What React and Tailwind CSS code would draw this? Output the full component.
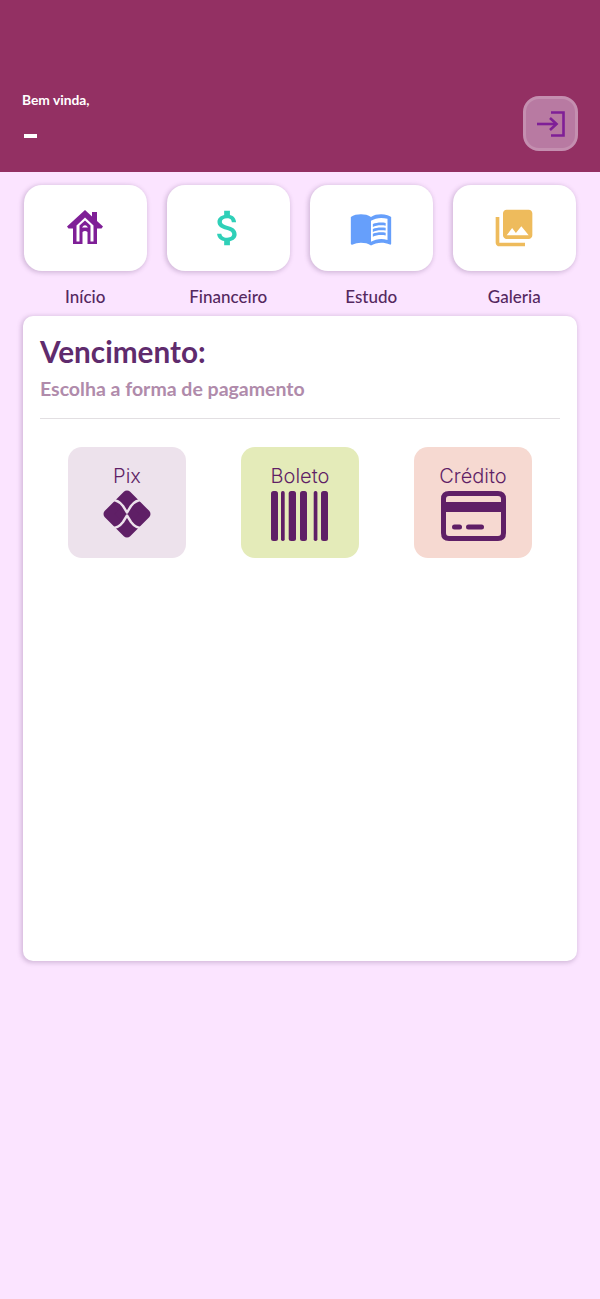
import { MdAttachMoney, MdMenuBook, MdPhotoLibrary } from "react-icons/md";

const HomeIcon = () => (
  <svg className="-mt-[2px]" width="36" height="34" viewBox="0 0 36 34">
    <path fill="#7f1f97" d="M18 0 L25 6.500 V2 H30 V11 L36 16.500 L34.500 18.500 H30 V34 H6 V18.500 H1.500 L0 16.500 Z" />
    <path fill="#ffffff" d="M18 7.500 L26.500 15.500 V31.500 H9.500 V15.500 Z" />
    <path fill="#7f1f97" d="M18 10.500 L23.500 15.500 V34 H12.500 V15.500 Z" />
    <path fill="#ffffff" d="M15.500 34 V22 Q18 20 20.500 22 V34 Z" />
    <path fill="#ffffff" d="M15 17.500 Q18 13 21 17.500 Z" />
  </svg>
);

const LoginIcon = () => (
  <svg width="30" height="26" viewBox="0 0 30 26" fill="none" stroke="#7f1f97" strokeWidth="2.600">
    <path d="M15 1.500 H27.500 V24.500 H15" />
    <path d="M1 13 H20" />
    <path d="M14 7 L20.500 13 L14 19" />
  </svg>
);

const PixIcon = () => (
  <svg className="-mt-[1px]" width="48" height="48" viewBox="0 0 48 48">
    <path
      d="M24 5 L43 24 L24 43 L5 24 Z"
      fill="#5f1f66"
      stroke="#5f1f66"
      strokeWidth="9"
      strokeLinejoin="round"
    />
    <path
      d="M9 10 C14 10 17 12 20 16 L24 22.500 L28 16 C31 12 34 10 39 10"
      fill="none"
      stroke="#ede2ec"
      strokeWidth="2.400"
      strokeLinejoin="round"
    />
    <path
      d="M9 38 C14 38 17 36 20 32 L24 25.500 L28 32 C31 36 34 38 39 38"
      fill="none"
      stroke="#ede2ec"
      strokeWidth="2.400"
      strokeLinejoin="round"
    />
  </svg>
);

const BarcodeIcon = () => (
  <svg width="58" height="50" viewBox="0 0 58 50" fill="#5f1f66">
    <rect x="0" y="0" width="7" height="50" rx="2.500" />
    <rect x="10" y="0" width="3.700" height="50" rx="1.700" />
    <rect x="17.700" y="0" width="7.300" height="50" rx="2.500" />
    <rect x="29" y="0" width="7" height="50" rx="2.500" />
    <rect x="42.700" y="0" width="3.700" height="50" rx="1.700" />
    <rect x="50" y="0" width="7" height="50" rx="2.500" />
  </svg>
);

const CardIcon = () => (
  <svg width="65" height="50" viewBox="0 0 65 50" fill="#5f1f66">
    <path
      fillRule="evenodd"
      d="M8 0 H57 Q65 0 65 8 V42 Q65 50 57 50 H8 Q0 50 0 42 V8 Q0 0 8 0 Z M8 5 Q5 5 5 8 V11 H60 V8 Q60 5 57 5 Z M5 21 V42 Q5 45 8 45 H57 Q60 45 60 42 V21 Z"
    />
    <rect x="11" y="33.500" width="10" height="5" rx="2.500" />
    <rect x="25" y="33.500" width="18" height="5" rx="2.500" />
  </svg>
);

const menu = [
  { label: "Início", icon: <HomeIcon /> },
  { label: "Financeiro", icon: <MdAttachMoney size={46} color="#2fd0b8" /> },
  { label: "Estudo", icon: <MdMenuBook size={44} color="#669ffb" /> },
  { label: "Galeria", icon: <MdPhotoLibrary size={44} color="#eebb5c" /> },
];

const payments = [
  { label: "Pix", bg: "bg-[#ede2ec]", icon: <PixIcon /> },
  { label: "Boleto", bg: "bg-[#e4ebb9]", icon: <BarcodeIcon /> },
  { label: "Crédito", bg: "bg-[#f6d9d1]", icon: <CardIcon /> },
];

const App = () => {
  return (
    <div className="min-h-[1299px] bg-[#fbe4ff] font-['Lato',sans-serif]">
      {/* HEADER */}
      <header className="flex h-[172px] items-end justify-between bg-[#933063] px-[22px] pb-[21px]">
        <div className="pb-[2px] text-white">
          <p className="text-[13.800px] font-bold leading-[18px]">Bem vinda,</p>
          <div className="mb-[11px] mt-[25px] h-[4px] w-[13px] translate-x-[2px] bg-white" />
        </div>
        <button className="flex h-[55px] w-[55px] items-center justify-center rounded-[16px] border-[3px] border-[#c48fb0] bg-[#b87aa2]">
          <LoginIcon />
        </button>
      </header>

      {/* MENU */}
      <nav className="grid grid-cols-4 gap-x-[20.500px] pl-[24px] pr-[24.500px] pt-[13px]">
        {menu.map((m) => (
          <div key={m.label} className="flex flex-col items-center">
            <div className="flex h-[86px] w-full items-center justify-center rounded-[18px] bg-white shadow-[-1px_1px_4px_1px_rgba(110,80,125,0.28)]">
              {m.icon}
            </div>
            <span className="mt-[16px] text-[17px] font-medium leading-[20px] text-[#55285f]">
              {m.label}
            </span>
          </div>
        ))}
      </nav>

      {/* CARD */}
      <main className="mx-[23px] mt-[9px] h-[645px] rounded-[10px] bg-white px-[17px] pt-[17px] shadow-[-1px_1px_4px_1px_rgba(110,80,125,0.28)]">
        <h1 className="text-[29.700px] font-bold leading-[38px] text-[#5f2b6d]">Vencimento:</h1>
        <p className="mt-[6px] text-[19.500px] font-bold leading-[24px] text-[#b08bab]">
          Escolha a forma de pagamento
        </p>
        <hr className="mt-[17px] border-[#e2dfe2]" />
        <div className="mt-[28px] flex justify-between px-[28px]">
          {payments.map((p) => (
            <div
              key={p.label}
              className={`flex h-[111px] w-[118px] flex-col items-center rounded-[14px] pt-[17px] ${p.bg}`}
            >
              <span className="font-['Inter',sans-serif] text-[20px] font-light leading-[24px] text-[#5f1f66]">
                {p.label}
              </span>
              <div className="mt-[3px]">{p.icon}</div>
            </div>
          ))}
        </div>
      </main>
    </div>
  );
};

export default App;
